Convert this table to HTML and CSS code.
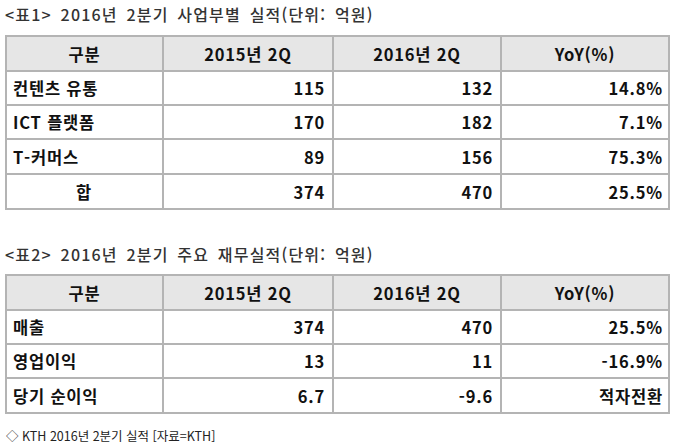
FILE: index.html
```html
<!DOCTYPE html>
<html lang="ko">
<head>
<meta charset="utf-8">
<link rel="stylesheet" href="styles.css">
</head>
<body>
<div class="page">
  <h2 class="title">&lt;표1&gt; 2016년 2분기 사업부별 실적(단위: 억원)</h2>
  <table class="grid">
    <colgroup><col class="c1"><col class="c2"><col class="c3"><col class="c4"></colgroup>
    <thead>
      <tr><th>구분</th><th>2015년 2Q</th><th>2016년 2Q</th><th>YoY(%)</th></tr>
    </thead>
    <tbody>
      <tr><td class="lbl">컨텐츠 유통</td><td>115</td><td>132</td><td class="last">14.8%</td></tr>
      <tr><td class="lbl">ICT 플랫폼</td><td>170</td><td>182</td><td class="last">7.1%</td></tr>
      <tr class="tall"><td class="lbl">T-커머스</td><td>89</td><td>156</td><td class="last">75.3%</td></tr>
      <tr class="tall"><td class="lbl sum">합</td><td>374</td><td>470</td><td class="last">25.5%</td></tr>
    </tbody>
  </table>
  <h2 class="title second">&lt;표2&gt; 2016년 2분기 주요 재무실적(단위: 억원)</h2>
  <table class="grid">
    <colgroup><col class="c1"><col class="c2"><col class="c3"><col class="c4"></colgroup>
    <thead>
      <tr><th>구분</th><th>2015년 2Q</th><th>2016년 2Q</th><th>YoY(%)</th></tr>
    </thead>
    <tbody>
      <tr><td class="lbl">매출</td><td>374</td><td>470</td><td class="last">25.5%</td></tr>
      <tr><td class="lbl">영업이익</td><td>13</td><td>11</td><td class="last">-16.9%</td></tr>
      <tr class="tall"><td class="lbl">당기 순이익</td><td>6.7</td><td>-9.6</td><td class="last">적자전환</td></tr>
    </tbody>
  </table>
  <p class="caption">◇ KTH 2016년 2분기 실적 [자료=KTH]</p>
</div>
</body>
</html>
```
FILE: styles.css
```css
html, body {
  margin: 0;
  padding: 0;
  background: #ffffff;
}
.page {
  padding: 4px 12px 0 5px;
  font-family: "Noto Sans CJK KR", "Noto Sans", sans-serif;
  color: #111111;
}
.title {
  margin: 0 0 11px 0;
  font-size: 16px;
  line-height: 20px;
  font-weight: 500;
  color: #333333;
  letter-spacing: 1.2px;
  word-spacing: 3px;
}
.title.second {
  margin-top: 34px;
  margin-bottom: 10px;
}
.grid {
  border-collapse: collapse;
  width: 663px;
  table-layout: fixed;
  font-size: 16.5px;
  font-weight: 700;
}
.c1 { width: 157px; }
.c2 { width: 170px; }
.c3 { width: 168px; }
.c4 { width: 168px; }
.grid th, .grid td {
  border: 2px solid #b4b4b4;
  height: 32px;
  padding: 0 7px;
  line-height: 20px;
  text-align: right;
  letter-spacing: 0.8px;
}
.grid th {
  background: #e6e6e6;
  text-align: center;
  height: 33px;
  font-weight: 700;
}
.grid td.lbl {
  text-align: left;
  padding-left: 6px;
}
.grid td.sum {
  text-align: center;
}
.grid td.last {
  padding-right: 5px;
}
.grid tr.tall td {
  height: 33px;
}
.caption {
  margin: 13px 0 0 1px;
  font-size: 12.5px;
  line-height: 18px;
  color: #222222;
  font-weight: 400;
}
```
